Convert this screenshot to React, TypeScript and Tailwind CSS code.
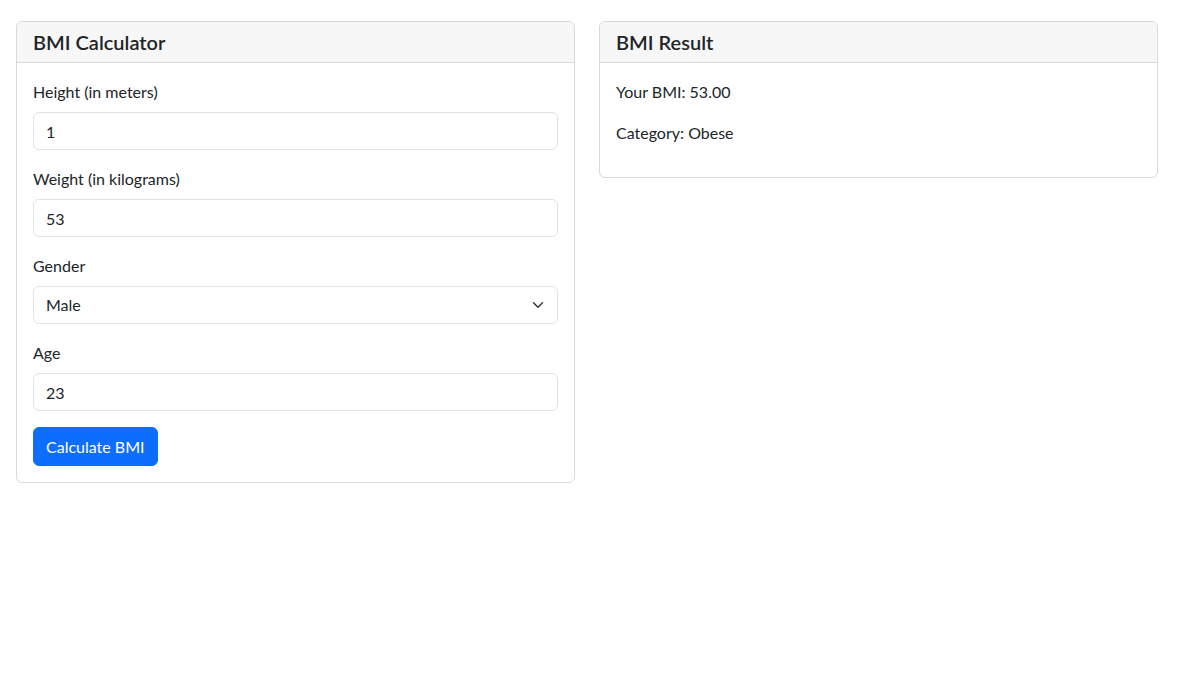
import { useState } from "react";

function categoryFor(bmi: number) {
  if (bmi < 18.5) return "Underweight";
  if (bmi < 25) return "Normal weight";
  if (bmi < 30) return "Overweight";
  return "Obese";
}

const inputCls =
  "block w-full h-[38px] px-3 py-1.5 text-base leading-6 text-[#212529] bg-white border border-[#dee2e6] rounded-md outline-none";

export default function App() {
  const [height, setHeight] = useState("1");
  const [weight, setWeight] = useState("53");
  const [gender, setGender] = useState("Male");
  const [age, setAge] = useState("23");
  const [bmi, setBmi] = useState<number | null>(53);

  const calculate = () => {
    const h = parseFloat(height);
    const w = parseFloat(weight);
    if (h > 0 && w > 0) setBmi(w / (h * h));
  };

  return (
    <div className="min-h-screen bg-white text-[#212529] font-['Lato','Liberation_Sans',sans-serif] pl-4 pr-[22px] pt-[21px]">
      <div className="grid grid-cols-2 gap-6 items-start">
        {/* calculator form */}
        <div className="border border-[#d9d9d9] rounded-md overflow-hidden">
          <div className="bg-[#f7f7f7] border-b border-[#d9d9d9] px-4 py-2">
            <h5 className="text-xl leading-6 font-semibold">BMI Calculator</h5>
          </div>
          <div className="p-4">
            <div className="mb-4">
              <label className="block mb-2 text-base leading-[25px]">Height (in meters)</label>
              <input className={inputCls} value={height} onChange={(e) => setHeight(e.target.value)} />
            </div>
            <div className="mb-4">
              <label className="block mb-2 text-base leading-[25px]">Weight (in kilograms)</label>
              <input className={inputCls} value={weight} onChange={(e) => setWeight(e.target.value)} />
            </div>
            <div className="mb-4">
              <label className="block mb-2 text-base leading-[25px]">Gender</label>
              <div className="relative">
                <select
                  className={inputCls + " appearance-none pr-9"}
                  value={gender}
                  onChange={(e) => setGender(e.target.value)}
                >
                  <option>Male</option>
                  <option>Female</option>
                </select>
                <svg
                  className="absolute right-3 top-[13px] w-4 h-3 pointer-events-none"
                  viewBox="0 0 16 16"
                  fill="none"
                  stroke="#343a40"
                  strokeWidth="2"
                  strokeLinecap="round"
                  strokeLinejoin="round"
                >
                  <path d="m2 5 6 6 6-6" />
                </svg>
              </div>
            </div>
            <div className="mb-4">
              <label className="block mb-2 text-base leading-[25px]">Age</label>
              <input className={inputCls} value={age} onChange={(e) => setAge(e.target.value)} />
            </div>
            <button
              onClick={calculate}
              className="block h-[39px] mt-px px-3 py-1.5 text-base leading-6 text-white bg-[#0d6efd] border border-[#0d6efd] rounded-md"
            >
              Calculate BMI
            </button>
          </div>
        </div>

        {/* result */}
        <div className="border border-[#d9d9d9] rounded-md overflow-hidden">
          <div className="bg-[#f7f7f7] border-b border-[#d9d9d9] px-4 py-2">
            <h5 className="text-xl leading-6 font-semibold">BMI Result</h5>
          </div>
          <div className="p-4">
            {bmi !== null && (
              <>
                <p className="mb-4 text-base leading-[25px]">Your BMI: {bmi.toFixed(2)}</p>
                <p className="mb-4 text-base leading-[25px]">Category: {categoryFor(bmi)}</p>
              </>
            )}
          </div>
        </div>
      </div>
    </div>
  );
}
